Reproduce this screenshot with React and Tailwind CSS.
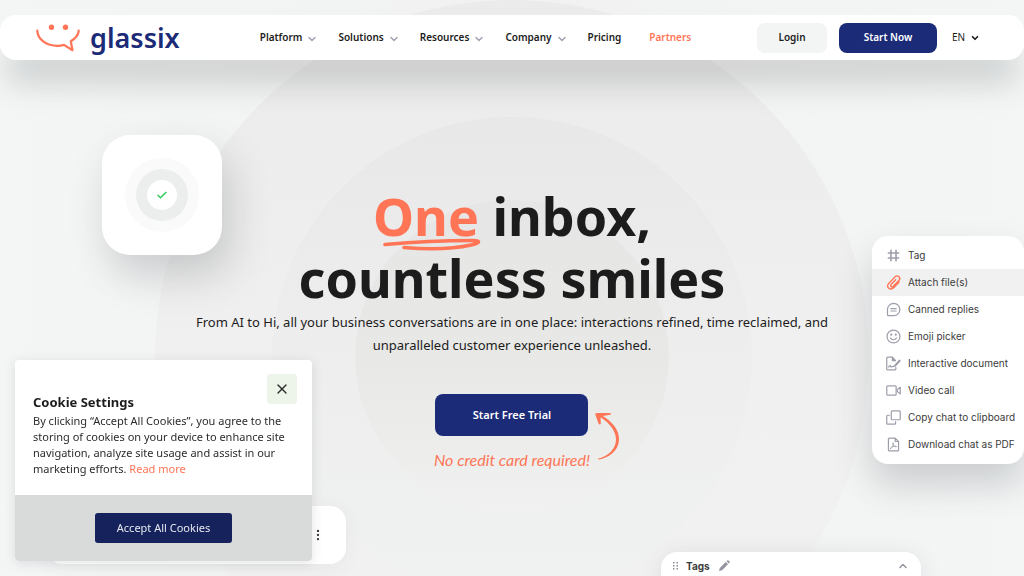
import { useState } from 'react'
import { ChevronDown, ChevronUp, EllipsisVertical, X } from 'lucide-react'

const NAV_ITEMS = ['Platform', 'Solutions', 'Resources', 'Company']

const Icon = ({ children, ...props }) => (
  <svg
    aria-hidden="true"
    viewBox="0 0 16 16"
    fill="none"
    stroke="currentColor"
    strokeWidth="1.3"
    strokeLinecap="round"
    strokeLinejoin="round"
    {...props}
  >
    {children}
  </svg>
)

const HashIcon = (props) => (
  <Icon {...props}>
    <path d="M5.300 2.500v11M10.700 2.500v11M2.500 5.300h11M2.500 10.700h11" strokeWidth="1.700" />
  </Icon>
)

const ClipIcon = (props) => (
  <Icon {...props}>
    <path
      d="m14 7.600-5.600 5.800c-3.300 3.300-8.600.4-6-3.800L9.600 2c2.800-2.600 6.600.6 4.400 3.600l-6.200 6.500c-1.600 1.500-3.600-.1-2.400-1.900L10.300 5"
      strokeWidth="1.500"
    />
  </Icon>
)

const CannedIcon = (props) => (
  <Icon {...props}>
    <path d="M8.200 1.400a6.600 6.600 0 1 1 0 13.200H2.600a1 1 0 0 1-1-1V8a6.600 6.600 0 0 1 6.600-6.600Z" />
    <path d="M5.200 7h5.600M5.200 9.600h5.600" />
  </Icon>
)

const SmileIcon = (props) => (
  <Icon {...props}>
    <circle cx="8" cy="8" r="6.900" />
    <path d="M4.800 9.600c1.400 2.500 5 2.500 6.400 0" />
    <circle cx="5.600" cy="6" r=".5" fill="currentColor" />
    <circle cx="10.400" cy="6" r=".5" fill="currentColor" />
  </Icon>
)

const DocumentIcon = (props) => (
  <Icon {...props}>
    <path d="M10 5 6.800 1.300H1.600a.8.8 0 0 0-.8.800v11.800c0 .5.300.8.800.8h8.100c.5 0 .8-.3.8-.8v-1.500" />
    <path d="M6.800 1.500V5H10Z" fill="currentColor" />
    <path d="M2.800 11.600c1.200-2 1.800-1.700 1.800-.7s.8 1 1.600.4l2.300-.3" />
    <path d="m9.500 10.500 5-5.500" strokeWidth="2.200" />
  </Icon>
)

const VideoIcon = (props) => (
  <Icon {...props}>
    <rect x=".8" y="3" width="10" height="10" rx="1" />
    <path d="M12.200 6.800 15.200 4.600v7l-3-2.400Z" />
  </Icon>
)

const CopyIcon = (props) => (
  <Icon {...props}>
    <rect x="5.600" y="1" width="9.600" height="9.400" rx="1" />
    <path d="M3.600 5.600H1.800a1 1 0 0 0-1 1V14a1 1 0 0 0 1 1h7.400a1 1 0 0 0 1-1v-1.600" />
  </Icon>
)

const PdfIcon = (props) => (
  <Icon {...props}>
    <path d="M9.800 1.200H3.600a1 1 0 0 0-1 1v11.600a1 1 0 0 0 1 1h8.800a1 1 0 0 0 1-1V4.800L9.800 1.200v3.600h3.600" />
    <path
      d="M5 12.400c1.800-1.200 3.300-4.200 3-5.800-.4-1.200-1.200-.2-.6 1.200.8 1.900 2.200 2.900 3.700 2.700.9-.5-.4-1-2.300-.7-1.500.2-3 .9-3.800 1.800-.4.600-.2.900 0 .8Z"
      strokeWidth=".9"
    />
  </Icon>
)

const CHAT_ACTIONS = [
  { label: 'Tag', Glyph: HashIcon },
  { label: 'Attach file(s)', Glyph: ClipIcon, active: true },
  { label: 'Canned replies', Glyph: CannedIcon },
  { label: 'Emoji picker', Glyph: SmileIcon },
  { label: 'Interactive document', Glyph: DocumentIcon },
  { label: 'Video call', Glyph: VideoIcon },
  { label: 'Copy chat to clipboard', Glyph: CopyIcon },
  { label: 'Download chat as PDF', Glyph: PdfIcon },
]

const Logo = () => (
  <a href="#home" className="flex items-center gap-2.5 text-[#1b2b78]">
    <svg aria-hidden="true" viewBox="0 0 44 28" className="h-7 w-11" fill="none" stroke="#ff7556" strokeWidth="2.200" strokeLinecap="round" strokeLinejoin="round">
      <circle cx="15.500" cy="3.200" r="2.700" fill="#ff7556" stroke="none" />
      <circle cx="29.500" cy="3.200" r="2.700" fill="#ff7556" stroke="none" />
      <path d="M1.300 6.600c0 9.200 9.800 15.200 20 15.200 2.500 0 4.600-.3 6.700-.9l8.500 5.300-1.700-9c5.200-3.200 7.800-7.200 7.900-10.600" />
    </svg>
    <span className="text-[27px] leading-8 font-semibold">glassix</span>
  </a>
)

const Header = () => (
  <header className="relative z-10 flex h-[45px] items-center rounded-2xl bg-white pr-11 pl-9 text-[10px] font-semibold text-[#1c1c1c] shadow-[0_28px_32px_-6px_rgba(60,64,66,0.22)]">
    <Logo />
    <nav className="ml-20 flex items-center gap-5">
      {NAV_ITEMS.map((label) => (
        <button key={label} type="button" className="flex items-center gap-1">
          {label}
          <ChevronDown className="mt-0.5 size-3 text-[#a3a3b3]" strokeWidth={3} />
        </button>
      ))}
      <a href="#pricing">Pricing</a>
      <a href="#partners" className="ml-2 text-[#ff7556]">Partners</a>
    </nav>
    <div className="ml-auto flex items-center">
      <a href="#login" className="flex h-[30px] w-[70px] items-center justify-center rounded-lg bg-[#f3f5f4]">Login</a>
      <a href="#start" className="ml-3 flex h-[30px] w-[98px] items-center justify-center rounded-lg bg-[#1b2b78] text-white">Start Now</a>
      <label className="relative ml-[15px] flex items-center font-normal">
        <select aria-label="Language" className="w-7 appearance-none bg-transparent">
          <option>EN</option>
        </select>
        <ChevronDown className="pointer-events-none absolute right-0 size-2.5" strokeWidth={4} />
      </label>
    </div>
  </header>
)

// concentric discs behind the headline
const Backdrop = () => (
  <div aria-hidden="true" className="pointer-events-none absolute inset-x-0 top-0 flex justify-center">
    <div className="flex size-[714px] shrink-0 items-center justify-center rounded-full bg-linear-to-b from-[#ebebeb] via-[#f0f0f0] to-[#f2f2f2]">
      <div className="flex size-[480px] items-center justify-center rounded-full bg-linear-to-b from-[#e8e8e8] via-[#eeeeee] to-[#f0f1f1]">
        <div className="size-[314px] rounded-full bg-linear-to-b from-[#e6e6e6] via-[#e8e8e6] to-[#f0f1f0]" />
      </div>
    </div>
  </div>
)

const Hero = () => (
  <section className="relative flex flex-col items-center px-4 pt-[125px] text-center text-[#1c1c1c]">
    <h1 className="text-[52px] leading-[62px] font-bold">
      <span className="relative text-[#ff7556]">
        One
        <svg aria-hidden="true" viewBox="0 0 98 13" className="absolute top-[58px] left-2.5 h-[13px] w-[98px]" fill="none" stroke="#ff7556" strokeLinecap="round">
          <path d="M2 6.500C30 4 70 2.500 90 2.500c8 0 7 2.500-2 4.500-16 3.600-42 4.500-67 2.500" strokeWidth="3.600" />
        </svg>
      </span>{' '}
      inbox,
      <br />
      countless smiles
    </h1>
    <p className="mt-0.5 max-w-[660px] text-[13px] leading-[23px]">
      From AI to Hi, all your business conversations are in one place: interactions refined, time reclaimed, and
      unparalleled customer experience unleashed.
    </p>
    <div className="relative mt-[37px] flex flex-col items-center">
      <a href="#trial" className="flex h-[42px] w-[153px] items-center justify-center rounded-lg bg-[#1b2b78] text-[11px] font-semibold text-white">
        Start Free Trial
      </a>
      <p className="mt-3 font-['Lato',sans-serif] text-base leading-6 text-[#ff7556] italic">No credit card required!</p>
      <svg aria-hidden="true" viewBox="0 0 26 50" className="absolute top-[18px] left-[161px] h-[50px] w-[26px]" fill="#ff7556">
        <path d="M0 1.500C5 .8 10 1.200 15.600 1.200c.7.400.6 1.200-.4 1.600L7.800 4C16 9 24.500 17 24 28c-.6 11-10 18-20.500 19.500-.9 0-.8-.8 0-1C13 44 20.500 37.500 21 28 21.300 19 14 10.500 5.600 5.200l.2 6.600c-.3 1-1.600 1-2.200 0L0 1.500Z" />
      </svg>
    </div>
  </section>
)

const StatusCard = () => (
  <div className="absolute top-[135px] left-[10%] flex size-[120px] items-center justify-center rounded-[28px] bg-white shadow-[8px_20px_40px_0_rgba(60,64,70,0.22)]">
    <div className="flex size-[74px] items-center justify-center rounded-full bg-[#fafafa]">
      <div className="flex size-[52px] items-center justify-center rounded-full bg-[#eceeee]">
        <div className="flex size-[30px] items-center justify-center rounded-full bg-white">
          <svg aria-hidden="true" viewBox="0 0 10 8" className="h-2 w-2.5" fill="none" stroke="#2fc95c" strokeWidth="1.500">
            <path d="M.6 4 3.500 6.700 9.300 1" />
          </svg>
        </div>
      </div>
    </div>
  </div>
)

const ActionMenu = () => (
  <ul className="absolute top-[236px] right-0 w-[152px] rounded-2xl bg-white py-1.5 font-['Inter',sans-serif] text-[10px] text-[#3b3b3b] shadow-[0_20px_36px_0_rgba(60,64,70,0.22)]">
    {CHAT_ACTIONS.map(({ label, Glyph, active }) => (
      <li key={label} className={active ? 'bg-[#f1f1f1]' : ''}>
        <button type="button" className="flex h-[27px] w-full items-center gap-[7px] pl-3.5 whitespace-nowrap">
          <Glyph className={active ? 'size-[15px] shrink-0 text-[#ff7556]' : 'size-[15px] shrink-0 text-[#9d9eab]'} />
          {label}
        </button>
      </li>
    ))}
  </ul>
)

const TagsCard = () => (
  <div className="absolute top-[552px] left-[661px] flex h-10 w-[260px] items-start rounded-2xl bg-white px-3 pt-1.5 font-['Inter',sans-serif] text-[10px] leading-4 font-bold text-[#3b3b3b] shadow-[0_4px_24px_rgba(60,64,70,0.12)]">
    <svg aria-hidden="true" viewBox="0 0 6 10" className="mt-1 h-2.5 w-1.5" fill="#8d8d96">
      <path d="M0 0h1.500v1.500H0zM3.500 0H5v1.500H3.500zM0 3h1.500v1.500H0zM3.500 3H5v1.500H3.500zM0 6h1.500v1.500H0zM3.500 6H5v1.500H3.500z" />
    </svg>
    <span className="ml-[7px]">Tags</span>
    <button type="button" aria-label="Edit tags" className="mt-0.5 ml-2 text-[#94949f]">
      <svg viewBox="0 0 12 12" className="size-3" fill="currentColor">
        <path d="m1 11 .8-3 6-6L10 4.200l-6 6L1 11Zm7.500-9.700.8-.8c.4-.4.800-.4 1.200 0l1 1c.4.400.4.800 0 1.200l-.8.8-2.200-2.200Z" />
      </svg>
    </button>
    <button type="button" aria-label="Collapse tags" className="mt-0.5 ml-auto text-[#94949f]">
      <ChevronUp className="size-3" strokeWidth={3} />
    </button>
  </div>
)

const ChatCard = () => (
  <div className="absolute top-[506px] left-[46px] flex h-[58px] w-[300px] items-center justify-end rounded-2xl bg-white pr-[21px] shadow-[0_4px_20px_rgba(60,64,70,0.06)]">
    <button type="button" aria-label="More">
      <EllipsisVertical className="size-3.5 text-[#3b3b3b]" strokeWidth={2} />
    </button>
  </div>
)

const CookieBanner = ({ onClose }) => (
  <aside aria-label="Cookie Settings" className="fixed bottom-[15px] left-[15px] z-20 w-[297px] rounded-sm bg-white text-[#2c2c2c] shadow-[0_2px_12px_rgba(60,64,70,0.14)]">
    <div className="flex flex-col px-[18px] pt-3.5 pb-[18px]">
      <button type="button" aria-label="Close" onClick={onClose} className="-mr-[3px] flex size-[30px] items-center justify-center self-end rounded-sm bg-[#edf4ea]">
        <X className="size-4" strokeWidth={2} />
      </button>
      <h2 className="-mt-3 text-[13px] leading-5 font-bold text-[#1c1c1c]">Cookie Settings</h2>
      <p className="mt-px text-[11px] leading-4">
        By clicking “Accept All Cookies”, you agree to the storing of cookies on your device to enhance site
        navigation, analyze site usage and assist in our marketing efforts.{' '}
        <a href="#cookies" className="text-[#ff7556]">Read more</a>
      </p>
    </div>
    <div className="flex h-[66px] items-center justify-center rounded-b-sm bg-[#d9dbda]">
      <button type="button" onClick={onClose} className="h-[30px] w-[137px] rounded-[3px] bg-[#15225b] text-[11px] text-[#e6e8ef]">
        Accept All Cookies
      </button>
    </div>
  </aside>
)

const App = () => {
  const [showCookies, setShowCookies] = useState(true)

  return (
    <main className="relative h-screen overflow-hidden bg-linear-to-r from-[#f4f6f6] via-[#f1f1f1] to-[#f4f6f6] pt-[15px] font-['Noto_Sans','Open_Sans',sans-serif]">
      <Backdrop />
      <Header />
      <Hero />
      <StatusCard />
      <ActionMenu />
      <ChatCard />
      <TagsCard />
      {showCookies && <CookieBanner onClose={() => setShowCookies(false)} />}
    </main>
  )
}

export default App
